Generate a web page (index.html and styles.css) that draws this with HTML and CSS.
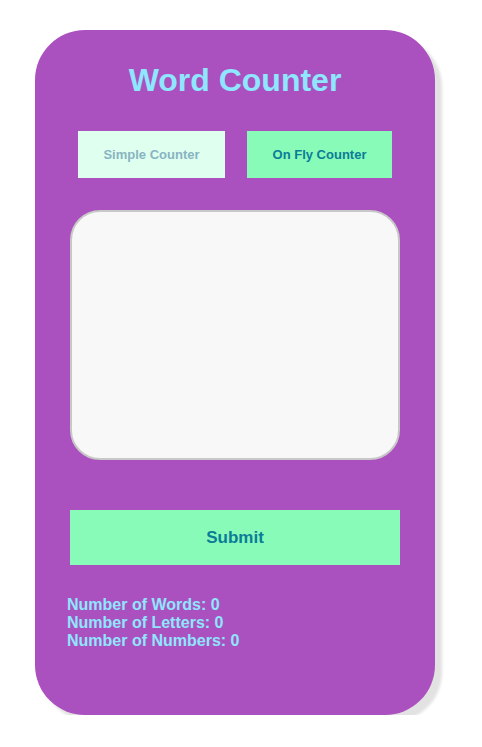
FILE: index.html
```html
<!DOCTYPE html>
<html lang="en">
<head>
<meta charset="utf-8">
<title>Word Counter</title>
<link rel="stylesheet" href="styles.css">
</head>
<body>
<div class="page">
  <div class="card">
    <h1 class="title">Word Counter</h1>
    <div class="modes">
      <button class="mode mode-simple">Simple Counter</button>
      <button class="mode mode-fly">On Fly Counter</button>
    </div>
    <textarea class="input"></textarea>
    <button class="submit">Submit</button>
    <div class="stats">
      <div class="stat">Number of Words: 0</div>
      <div class="stat">Number of Letters: 0</div>
      <div class="stat">Number of Numbers: 0</div>
    </div>
  </div>
</div>
</body>
</html>
```
FILE: styles.css
```css
* { box-sizing: border-box; }
html, body { margin: 0; padding: 0; background: #ffffff; }
body { font-family: "Liberation Sans", Arial, sans-serif; }
.page { padding: 30px 0 0 35px; }
.card {
  width: 400px;
  height: 685px;
  background: #ab50bf;
  border-radius: 50px;
  box-shadow: 7px 7px 3px #e2e2e2;
  padding-top: 32px;
  display: flex;
  flex-direction: column;
}
.title {
  margin: 0;
  font-size: 32px;
  line-height: 37px;
  font-weight: bold;
  color: #8ee6ff;
  text-align: center;
}
.modes {
  margin-top: 32px;
  display: flex;
  justify-content: center;
  gap: 22px;
}
.mode {
  height: 47px;
  border: none;
  font-family: "Liberation Sans", Arial, sans-serif;
  font-size: 13px;
  font-weight: bold;
  padding: 0;
}
.mode-simple { width: 147px; background: #dfffef; color: #88b4c2; }
.mode-fly { width: 145px; background: #87fbb7; color: #0b7c98; }
.input {
  display: block;
  margin: 32px 0 0 35px;
  width: 330px;
  height: 250px;
  border: 2px solid #c8c8c8;
  border-radius: 30px;
  background: #f8f8f8;
  resize: none;
  outline: none;
}
.submit {
  margin: 50px 0 0 35px;
  width: 330px;
  height: 55px;
  border: none;
  background: #87fbb7;
  color: #0b7c98;
  font-family: "Liberation Sans", Arial, sans-serif;
  font-size: 17px;
  font-weight: bold;
  padding: 0;
}
.stats {
  margin: 31px 0 0 32px;
  color: #8ee6ff;
  font-size: 16px;
  font-weight: bold;
  line-height: 18px;
}
```
